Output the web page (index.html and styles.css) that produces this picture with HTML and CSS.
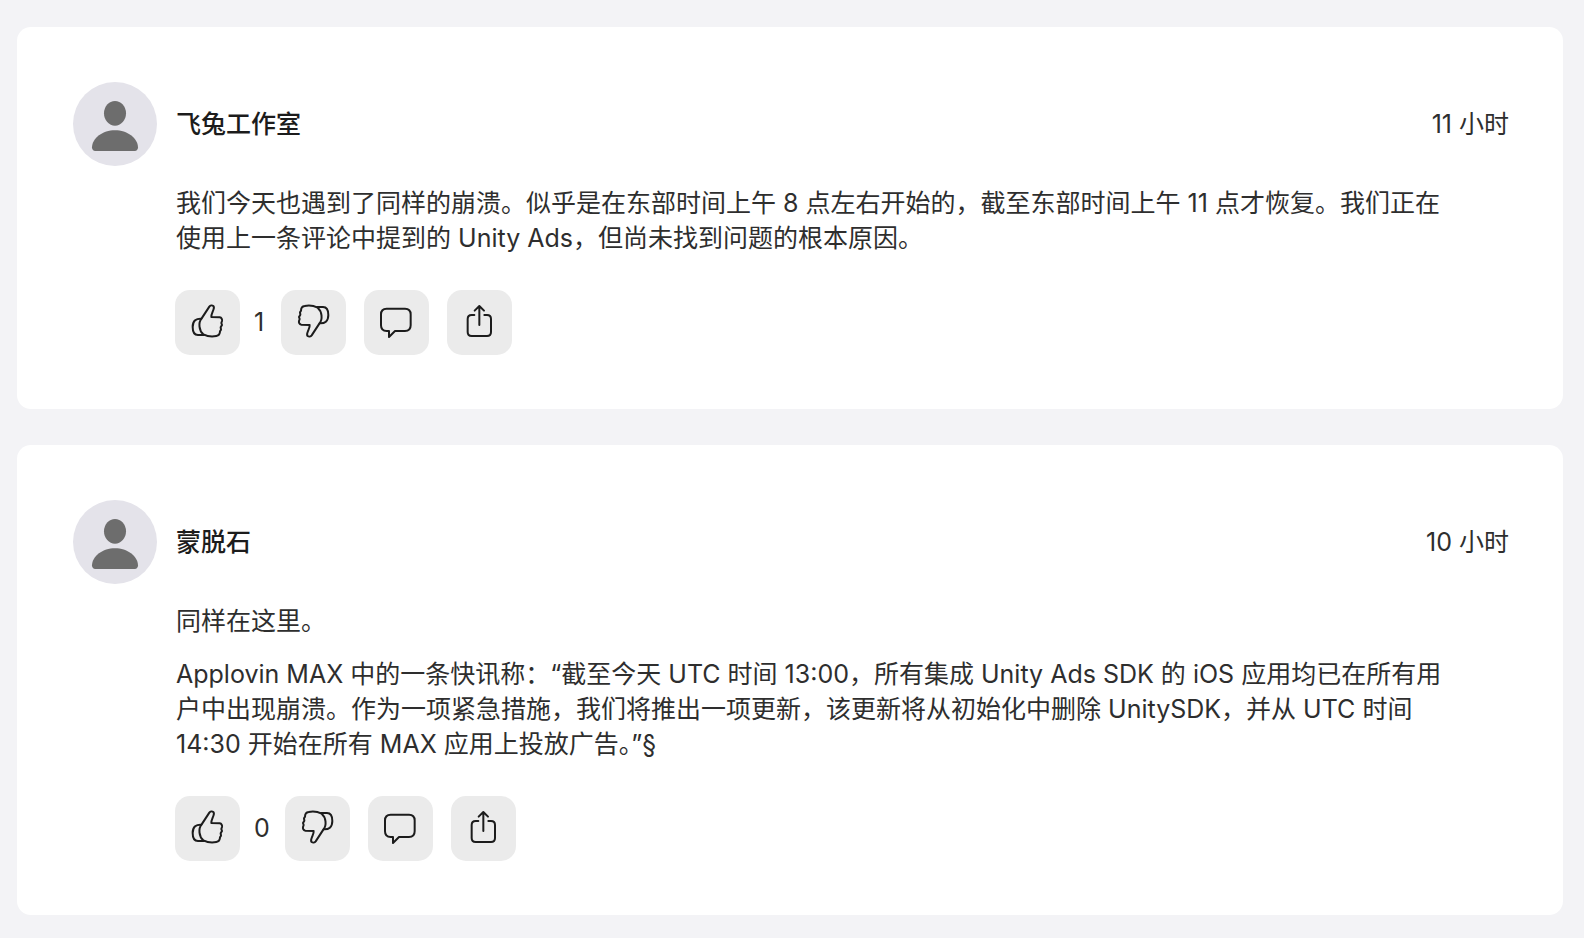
FILE: index.html
```html
<!DOCTYPE html>
<html lang="zh-CN">
<head>
<meta charset="utf-8">
<meta name="viewport" content="width=device-width, initial-scale=1">
<title>评论</title>
<link rel="stylesheet" href="styles.css">
</head>
<body>
<svg class="sprite" aria-hidden="true">
  <symbol id="person" viewBox="0 0 252 252">
    <ellipse cx="126" cy="94" rx="33" ry="37"/>
    <path d="M67 207C60 207 57 202 57 196C58 168 89 145 126 145C163 145 194 168 195 196C195 202 192 207 185 207Z"/>
  </symbol>
  <symbol id="thumb" viewBox="0 0 195 195">
    <path d="M80 85L103 50C106 46 111 45 115 48C118 51 117 55 115 60C112 68 108 75 109 81L134 82C140 83 142 88 141 93L139 99L141 105L137 112L138 119L135 124C135 132 131 137 124 138C110 141 95 138 85 133C72 122 69 98 80 85Z"/>
    <path d="M79 86C64 85 53 92 53 111C53 126 59 135 69 135L87 135"/>
  </symbol>
  <symbol id="bubble" viewBox="0 0 195 195">
    <path d="M68 56H123Q140 56 140 73V106Q140 123 123 123H93L75 141V123H68Q51 123 51 106V73Q51 56 68 56Z"/>
  </symbol>
  <symbol id="share" viewBox="0 0 195 195">
    <path d="M82 75H74Q62 75 62 87V126Q62 138 74 138H120Q132 138 132 126V87Q132 75 120 75H112M97 105V48M83 62L97 48L111 62"/>
  </symbol>
</svg>
<main class="thread">
  <article class="card">
    <header class="head">
      <svg class="avatar" aria-hidden="true"><use href="#person"/></svg>
      <h2 class="author">飞兔工作室</h2>
      <time class="time">11 小时</time>
    </header>
    <div class="body">
      <p>我们今天也遇到了同样的崩溃。似乎是在东部时间上午 8 点左右开始的，截至东部时间上午 11 点才恢复。我们正在使用上一条评论中提到的 Unity Ads，但尚未找到问题的根本原因。</p>
    </div>
    <footer class="actions">
      <button class="action" type="button" aria-label="赞"><svg class="icon"><use href="#thumb"/></svg></button>
      <span class="count">1</span>
      <button class="action" type="button" aria-label="踩"><svg class="icon icon-down"><use href="#thumb"/></svg></button>
      <button class="action spaced" type="button" aria-label="回复"><svg class="icon"><use href="#bubble"/></svg></button>
      <button class="action spaced" type="button" aria-label="分享"><svg class="icon"><use href="#share"/></svg></button>
    </footer>
  </article>
  <article class="card">
    <header class="head">
      <svg class="avatar" aria-hidden="true"><use href="#person"/></svg>
      <h2 class="author">蒙脱石</h2>
      <time class="time">10 小时</time>
    </header>
    <div class="body">
      <p>同样在这里。</p>
      <p>Applovin MAX 中的一条快讯称：“截至今天 UTC 时间 13:00，所有集成 Unity Ads SDK 的 iOS 应用均已在所有用户中出现崩溃。作为一项紧急措施，我们将推出一项更新，该更新将从初始化中删除 UnitySDK，并从 UTC 时间 14:30 开始在所有 MAX 应用上投放广告。”§</p>
    </div>
    <footer class="actions">
      <button class="action" type="button" aria-label="赞"><svg class="icon"><use href="#thumb"/></svg></button>
      <span class="count">0</span>
      <button class="action" type="button" aria-label="踩"><svg class="icon icon-down"><use href="#thumb"/></svg></button>
      <button class="action spaced" type="button" aria-label="回复"><svg class="icon"><use href="#bubble"/></svg></button>
      <button class="action spaced" type="button" aria-label="分享"><svg class="icon"><use href="#share"/></svg></button>
    </footer>
  </article>
</main>
</body>
</html>
```
FILE: styles.css
```css
* { box-sizing: border-box; }

body {
  margin: 0;
  background: #f3f3f6;
  color: #2e2e2e;
  font: 25px/35px Inter, "Noto Sans CJK SC", sans-serif;
}

.sprite { display: none; }

.thread {
  display: flex;
  flex-direction: column;
  gap: 36px;
  padding: 27px 21px 23px 17px;
}

.card {
  padding: 55px 54px 54px 56px;
  border-radius: 14px;
  background: #fff;
}

.head {
  display: flex;
  align-items: center;
  gap: 19px;
}

.avatar {
  flex: none;
  width: 84px;
  height: 84px;
  border-radius: 50%;
  background: #e4e3ea;
  fill: #6d6d6d;
}

.author {
  margin: 0;
  color: #1c1c1c;
  font-size: 25px;
  font-weight: 500;
}

.time { margin-left: auto; }

.body {
  display: grid;
  gap: 18px;
  padding: 20px 52px 0 103px;
}

.body p { margin: 0; }

.actions {
  display: flex;
  align-items: center;
  padding: 34px 0 0 102px;
}

.action {
  width: 65px;
  height: 65px;
  padding: 0;
  border: 0;
  border-radius: 15px;
  background: #ebebeb;
}

.spaced { margin-left: 18px; }

.count {
  min-width: 41px;
  padding: 0 15px 0 14px;
}

.icon {
  display: block;
  width: 65px;
  height: 65px;
  fill: none;
  stroke: #1c1c1c;
  stroke-width: 6;
  stroke-linecap: round;
  stroke-linejoin: round;
}

.icon-down { transform: rotate(180deg) translateY(3px); }
```
